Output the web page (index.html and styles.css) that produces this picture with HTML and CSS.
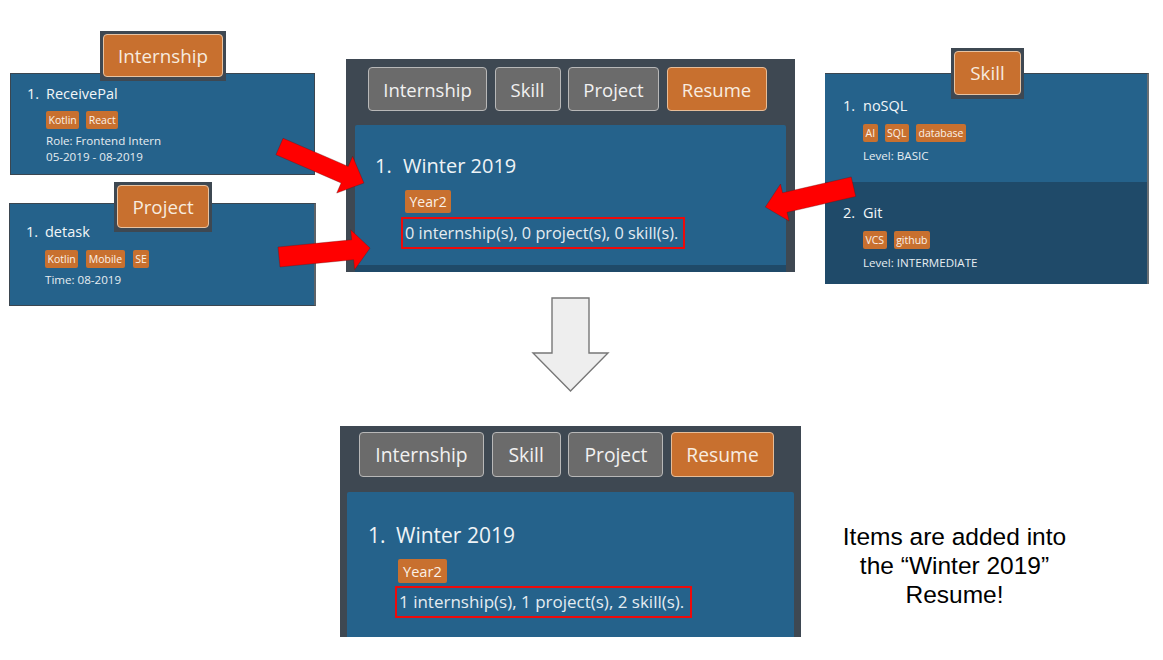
FILE: index.html
```html
<!DOCTYPE html>
<html lang="en">
<head>
<meta charset="utf-8">
<title>Resume add items</title>
<link rel="stylesheet" href="styles.css">
</head>
<body>
<div class="slide">

  <div class="snip snip-intern">
    <div class="cell">
      <div class="item-title"><span class="num">1.</span><span>ReceivePal</span></div>
      <div class="item-body">
        <div class="tags"><span class="tag">Kotlin</span><span class="tag">React</span></div>
        <div class="detail first">Role: Frontend Intern</div>
        <div class="detail">05-2019 - 08-2019</div>
      </div>
    </div>
    <div class="tab-label tab-intern"><span class="tab-btn">Internship</span></div>
  </div>

  <div class="snip snip-project">
    <div class="cell">
      <div class="item-title"><span class="num">1.</span><span>detask</span></div>
      <div class="item-body">
        <div class="tags"><span class="tag">Kotlin</span><span class="tag">Mobile</span><span class="tag">SE</span></div>
        <div class="detail first">Time: 08-2019</div>
      </div>
    </div>
    <div class="tab-label tab-project"><span class="tab-btn">Project</span></div>
  </div>

  <div class="snip snip-skill">
    <div class="cell skill-cell">
      <div class="item-title"><span class="num">1.</span><span>noSQL</span></div>
      <div class="item-body">
        <div class="tags"><span class="tag">AI</span><span class="tag">SQL</span><span class="tag">database</span></div>
        <div class="detail first">Level: BASIC</div>
      </div>
    </div>
    <div class="cell skill-cell dark">
      <div class="item-title"><span class="num">2.</span><span>Git</span></div>
      <div class="item-body">
        <div class="tags"><span class="tag">VCS</span><span class="tag">github</span></div>
        <div class="detail first">Level: INTERMEDIATE</div>
      </div>
    </div>
    <div class="tab-label tab-skill"><span class="tab-btn">Skill</span></div>
  </div>

  <div class="snip panel panel-before">
    <div class="btn-row">
      <span class="btn w-intern">Internship</span>
      <span class="btn w-skill">Skill</span>
      <span class="btn w-project">Project</span>
      <span class="btn btn-active w-resume">Resume</span>
    </div>
    <div class="resume-card">
      <div class="resume-title"><span class="rnum">1.</span><span>Winter 2019</span></div>
      <div class="resume-body">
        <span class="year-tag">Year2</span>
        <span class="count-box">0 internship(s), 0 project(s), 0 skill(s).</span>
      </div>
    </div>
    <div class="next-cell"></div>
  </div>

  <div class="snip panel panel-after">
    <div class="btn-row">
      <span class="btn w-intern">Internship</span>
      <span class="btn w-skill">Skill</span>
      <span class="btn w-project">Project</span>
      <span class="btn btn-active w-resume">Resume</span>
    </div>
    <div class="resume-card">
      <div class="resume-title"><span class="rnum">1.</span><span>Winter 2019</span></div>
      <div class="resume-body">
        <span class="year-tag">Year2</span>
        <span class="count-box">1 internship(s), 1 project(s), 2 skill(s).</span>
      </div>
    </div>
  </div>

  <div class="snip note">Items are added into<br>the “Winter 2019”<br>Resume!</div>

  <svg class="overlay" width="1163" height="660" viewBox="0 0 1163 660" aria-hidden="true">
    <polygon class="down-arrow" points="552,298 589,298 589,353 608,353 570.5,391 533,353 552,353"/>
    <g class="red-arrow">
      <polygon transform="translate(279.5,146.5) rotate(23.4)" points="0,-9 71,-9 71,-20 92,0 71,20 71,9 0,9"/>
      <polygon transform="translate(279,257) rotate(-5.6)" points="0,-10 74,-10 74,-20 91.5,0 74,20 74,10 0,10"/>
      <polygon transform="translate(853.5,186.7) rotate(167)" points="0,-10 70.5,-10 70.5,-19 90.5,0 70.5,19 70.5,10 0,10"/>
    </g>
  </svg>
</div>
</body>
</html>
```

FILE: styles.css
```css
* { box-sizing: border-box; }

html, body {
  margin: 0;
  padding: 0;
  background: #ffffff;
}

body {
  font-family: "Open Sans", "Noto Sans", sans-serif;
  color: #eef3f6;
}

.slide {
  position: relative;
  width: 1163px;
  height: 660px;
  overflow: hidden;
  background: #ffffff;
}

.snip { position: absolute; }

/* ---------- small list snippets ---------- */
.snip-intern { left: 10px; top: 73px; width: 305px; height: 102px; }
.snip-project { left: 9px; top: 203px; width: 307px; height: 103px; }
.snip-skill {
  left: 825px; top: 73px; width: 324px; height: 211px;
  display: flex; flex-direction: column;
  border-top: 1px solid #3b4650;
  border-right: 2px solid #6a6f73;
}

.cell {
  height: 100%;
  background: #25628b;
  border: 1px solid #3b4650;
  padding: 10px 0 0 16px;
}
.snip-project .cell { padding-top: 18px; border-right: 2px solid #5d6368; }

.skill-cell {
  height: 108px;
  border: none;
  padding: 22px 0 0 18px;
}
.skill-cell.dark {
  height: auto;
  flex: 1;
  background: #1f4a69;
  padding-top: 21px;
}

.item-title {
  display: flex;
  font-size: 14.5px;
  line-height: 20px;
  color: #f2f6f8;
}
.num { width: 19px; flex: none; }
.skill-cell .num { width: 20px; }

.item-body { padding-left: 19px; }
.skill-cell .item-body { padding-left: 20px; }

.tags {
  display: flex;
  gap: 7px;
  margin-top: 7px;
}
.snip-project .tags { margin-top: 8px; gap: 8px; }
.skill-cell .tags { margin-top: 8px; }

.tag {
  display: block;
  background: #c8702f;
  color: #fbf1e8;
  font-size: 10.5px;
  line-height: 14px;
  padding: 2px 2.5px;
  border-radius: 2px;
}

.detail {
  font-size: 11.6px;
  line-height: 16px;
  color: #e6edf1;
  white-space: nowrap;
}
.detail.first { margin-top: 4px; }
.skill-cell .detail.first { margin-top: 6px; }

/* ---------- tab labels over the snippets ---------- */
.tab-label {
  position: absolute;
  display: flex;
  padding: 3px 3px 4px;
  background: #3e4852;
}
.tab-intern { left: 90px; top: -42px; width: 126px; height: 50px; }
.tab-project { left: 105px; top: -21px; width: 98px; height: 50px; }
.tab-skill { left: 126px; top: -26px; width: 73px; height: 51px; }

.tab-btn {
  flex: 1;
  display: flex;
  align-items: center;
  justify-content: center;
  background: #c8702f;
  border: 1.5px solid #e7c3a2;
  border-radius: 4px;
  color: #f7ebdf;
  font-size: 18.8px;
}

/* ---------- resume panels ---------- */
.panel {
  display: flex;
  flex-direction: column;
  background: #3e4852;
}
.panel-before {
  left: 346px; top: 59px; width: 449px; height: 213px;
  padding: 8px 9px 0;
}
.panel-after {
  left: 340px; top: 426px; width: 461px; height: 211px;
  padding: 6px 7px 0;
}

.btn-row { display: flex; }
.panel-before .btn-row { gap: 7.5px; padding-left: 13px; }
.panel-after .btn-row { gap: 7.7px; padding-left: 12px; }

.btn {
  display: flex;
  align-items: center;
  justify-content: center;
  height: 44px;
  background: #6b6b6b;
  border: 1.5px solid #b8b8b8;
  border-radius: 4px;
  color: #f1f1f1;
  font-size: 18.5px;
}
.btn-active {
  background: #c8702f;
  border-color: #e7bd98;
  color: #f8ece0;
}
.panel-before .w-intern { width: 119px; }
.panel-before .w-skill { width: 66px; }
.panel-before .w-project { width: 91px; }
.panel-before .w-resume { width: 100px; }

.panel-after .btn { height: 45px; font-size: 19.3px; }
.panel-after .w-intern { width: 125px; }
.panel-after .w-skill { width: 69px; }
.panel-after .w-project { width: 95px; }
.panel-after .w-resume { width: 103px; }

.resume-card {
  background: #25628b;
  border-radius: 2px 2px 0 0;
}
.panel-before .resume-card {
  margin-top: 14px;
  height: 140px;
  padding: 27px 0 0 20px;
}
.panel-after .resume-card {
  margin-top: 15px;
  flex: 1;
  padding: 28.5px 0 0 21px;
}
.next-cell {
  height: 7px;
  background: #1f4a69;
}

.resume-title {
  display: flex;
  color: #eef3f6;
}
.rnum { width: 28px; flex: none; }
.panel-before .resume-title { font-size: 20px; line-height: 27px; }
.panel-after .resume-title { font-size: 21px; line-height: 28px; }

.resume-body {
  display: flex;
  flex-direction: column;
  align-items: flex-start;
  padding-left: 28px;
}

.year-tag {
  display: block;
  margin-left: 2px;
  background: #c8702f;
  color: #fbf0e6;
  border-radius: 2px;
}
.panel-before .year-tag {
  margin-top: 11px;
  font-size: 14px;
  line-height: 17px;
  padding: 3px 4.5px;
}
.panel-after .year-tag {
  margin-top: 10.5px;
  font-size: 14.6px;
  line-height: 18px;
  padding: 3px 5px;
}

.count-box {
  display: block;
  border: 2px solid #ee0a0a;
  color: #e4ecf1;
  white-space: nowrap;
}
.panel-before .count-box {
  margin: 4px 0 0 -2px;
  font-size: 16.3px;
  line-height: 22px;
  padding: 3px 5px 3px 2px;
}
.panel-after .count-box {
  margin: 3px 0 0 -1px;
  font-size: 17px;
  line-height: 22px;
  padding: 3px 6px 3px 2px;
}

/* ---------- note ---------- */
.note {
  left: 829.5px;
  top: 521.5px;
  width: 250px;
  text-align: center;
  font-family: "Liberation Sans", Arial, sans-serif;
  font-size: 24.5px;
  line-height: 29px;
  color: #000000;
}

/* ---------- drawn arrows ---------- */
.overlay {
  position: absolute;
  left: 0;
  top: 0;
  pointer-events: none;
}
.down-arrow {
  fill: #eeeeee;
  stroke: #777777;
  stroke-width: 1.4;
}
.red-arrow polygon {
  fill: #ff0000;
  stroke: rgba(90, 20, 20, 0.45);
  stroke-width: 0.7;
}
```
